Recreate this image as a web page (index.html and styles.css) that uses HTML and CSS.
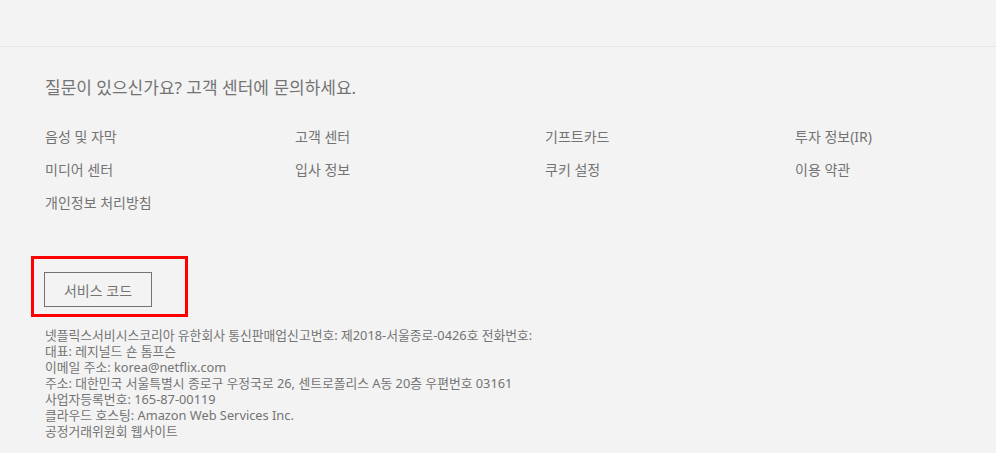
FILE: index.html
```html
<!DOCTYPE html>
<html lang="ko">
<head>
    <meta charset="UTF-8">
    <meta name="viewport" content="width=device-width, initial-scale=1.0">
    <title>넷플릭스 푸터</title>
    <link rel="stylesheet" href="styles.css">
</head>
<body>
    <div class="top-space"></div>
    <footer class="site-footer">
        <p class="footer-question">질문이 있으신가요? 고객 센터에 문의하세요.</p>
        <ul class="footer-links">
            <li><a href="#">음성 및 자막</a></li>
            <li><a href="#">고객 센터</a></li>
            <li><a href="#">기프트카드</a></li>
            <li><a href="#">투자 정보(IR)</a></li>
            <li><a href="#">미디어 센터</a></li>
            <li><a href="#">입사 정보</a></li>
            <li><a href="#">쿠키 설정</a></li>
            <li><a href="#">이용 약관</a></li>
            <li><a href="#">개인정보 처리방침</a></li>
        </ul>
        <div class="service-code-box">
            <button class="service-code" type="button">서비스 코드</button>
        </div>
        <div class="company-info">
            <p>넷플릭스서비시스코리아 유한회사 통신판매업신고번호: 제2018-서울종로-0426호 전화번호:</p>
            <p>대표: 레지널드 숀 톰프슨</p>
            <p>이메일 주소: korea@netflix.com</p>
            <p>주소: 대한민국 서울특별시 종로구 우정국로 26, 센트로폴리스 A동 20층 우편번호 03161</p>
            <p>사업자등록번호: 165-87-00119</p>
            <p>클라우드 호스팅: Amazon Web Services Inc.</p>
            <p><a href="#">공정거래위원회 웹사이트</a></p>
        </div>
    </footer>
</body>
</html>
```

FILE: styles.css
```css
body {
    margin: 0;
    background-color: #f3f3f3;
    color: #737373;
    font-family: "Noto Sans", "Noto Sans CJK KR", sans-serif;
}
a {
    color: #737373;
    text-decoration: none;
}
.top-space {
    height: 46px;
}
.site-footer {
    border-top: 1px solid #e6e6e6;
    padding: 0 45px 14px;
}
.footer-question {
    margin: 31px 0 0;
    font-size: 17px;
    line-height: 20px;
}
.footer-links {
    list-style: none;
    margin: 22px 0 0;
    padding: 0;
    display: grid;
    grid-template-columns: repeat(4, 250px);
    font-size: 14px;
    line-height: 33px;
}
.service-code-box {
    display: inline-block;
    margin: 37px 0 0 -14px;
    padding: 13px 33px 7px 10px;
    border: 3px solid #f00;
}
.service-code {
    display: block;
    width: 108px;
    height: 35px;
    padding: 0;
    background: transparent;
    border: 1px solid #737373;
    color: #737373;
    font-family: inherit;
    font-size: 14px;
}
.company-info {
    margin-top: 10px;
    font-size: 12.8px;
    line-height: 16px;
}
.company-info p {
    margin: 0;
}
```
